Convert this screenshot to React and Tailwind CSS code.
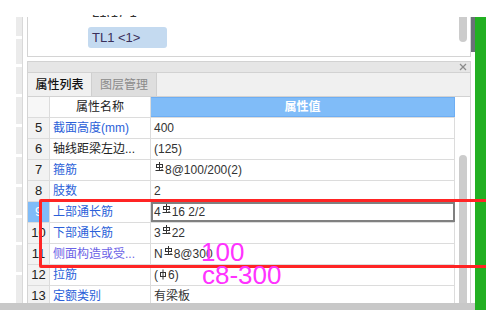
import React from 'react';

const BLUE = 'text-[#2b5fd9]';

function SymIII() {
  return (
    <svg width="9" height="10" viewBox="0 0 9 10" className="inline-block mx-[1px] align-[2px]">
      <line x1="4.5" y1="0" x2="4.5" y2="8" stroke="#333" strokeWidth="1" />
      <rect x="1.5" y="2.5" width="6" height="3" fill="none" stroke="#333" strokeWidth="1" />
      <line x1="0.5" y1="8.5" x2="8.5" y2="8.5" stroke="#333" strokeWidth="1" />
      <line x1="6.5" y1="7" x2="7.5" y2="8" stroke="#333" strokeWidth="1" />
    </svg>
  );
}

function SymI() {
  return (
    <svg width="8" height="11" viewBox="0 0 8 11" className="inline-block mx-[1px] align-[-1px]">
      <line x1="4" y1="0.5" x2="4" y2="10.5" stroke="#333" strokeWidth="1" />
      <rect x="1.5" y="3.5" width="5" height="4" fill="none" stroke="#333" strokeWidth="1" />
    </svg>
  );
}

const rows = [
  { n: 5, label: '截面高度(mm)', color: BLUE, value: ['400'] },
  { n: 6, label: '轴线距梁左边...', color: 'text-[#222]', value: ['(125)'] },
  { n: 7, label: '箍筋', color: BLUE, value: [<SymIII key="s" />, '8@100/200(2)'] },
  { n: 8, label: '肢数', color: BLUE, value: ['2'] },
  { n: 9, label: '上部通长筋', color: BLUE, value: ['4', <SymIII key="s" />, '16 2/2'], sel: true },
  { n: 10, label: '下部通长筋', color: BLUE, value: ['3', <SymIII key="s" />, '22'] },
  { n: 11, label: '侧面构造或受...', color: 'text-[#6b62e6]', value: ['N', <SymIII key="s" />, '8@300'] },
  { n: 12, label: '拉筋', color: BLUE, value: ['(', <SymI key="s" />, '6)'] },
  { n: 13, label: '定额类别', color: BLUE, value: ['有梁板'] },
];

const stripSegs = [19, 25, 27, 27, 27, 27, 28, 24, 27, 40];

export default function App() {
  return (
    <div className="relative w-[486px] h-[310px] overflow-hidden bg-white text-[12px] text-[#333] font-['Liberation_Sans','Noto_Sans_CJK_SC',sans-serif]">
      {/* top clipped text */}
      <div className="h-[17px] pt-[15px] pl-[92px]">
        <div className="h-[2px] overflow-hidden">
          <div className="-mt-[9px] text-[13px] leading-[13px] whitespace-pre text-[#333]">L1(1)  1</div>
        </div>
      </div>

      <div className="flex h-[293px]">
        <div className="flex flex-col w-[475px]">
          <div className="flex h-[286px]">
            <div className="w-[16px]" />
            <div className="w-[6px] flex flex-col gap-[3px] overflow-hidden">
              {stripSegs.map((h, i) => (
                <div key={i} className="bg-[#ebebeb] shrink-0" style={{ height: h }} />
              ))}
            </div>
            <div className="w-[1px] bg-[#d9d9d9]" />
            <div className="w-[4px]" />

            {/* panel column */}
            <div className="w-[444px] flex flex-col">
              {/* top panel */}
              <div className="h-[40px] border-l border-r border-b border-[#d4d4d4] flex">
                <div className="flex-1 pl-[60px] pt-[10px]">
                  <div className="w-[79px] h-[21px] rounded-[3px] bg-[#c4daf0] pl-[4px] text-[13px] leading-[21px] text-[#3a2f5a]">
                    TL1 &lt;1&gt;
                  </div>
                </div>
                <div className="w-[15px] pl-[4px]">
                  <div className="w-[8px] h-[25px] bg-[#cccccc] rounded-b-[4px]" />
                </div>
              </div>

              <div className="h-[4px]" />

              {/* property panel */}
              <div className="flex-1 border-l border-r border-[#d4d4d4] flex flex-col overflow-hidden">
                <div className="h-[12px] border-t border-b border-[#d2d2d2] bg-[#e6e6e6] flex justify-end items-center pr-[3px] shrink-0">
                  <svg width="8" height="8" viewBox="0 0 8 8">
                    <line x1="1" y1="1" x2="7" y2="7" stroke="#8c8c8c" strokeWidth="1.2" />
                    <line x1="7" y1="1" x2="1" y2="7" stroke="#8c8c8c" strokeWidth="1.2" />
                  </svg>
                </div>
                <div className="h-[24px] bg-[#f0f0f0] border-b border-[#d2d2d2] flex shrink-0">
                  <div className="w-[64px] border-r border-[#cfcfcf] flex items-center justify-center text-[12px] text-[#111] font-medium">
                    属性列表
                  </div>
                  <div className="w-[65px] border-r border-[#cfcfcf] bg-[#dedede] flex items-center justify-center text-[12px] text-[#8a8a8a]">
                    图层管理
                  </div>
                </div>

                <div className="flex flex-1 overflow-hidden">
                  <div className="w-[427px] flex flex-col">
                    {/* header */}
                    <div className="flex h-[21px] border-b border-[#dcdcdc] shrink-0">
                      <div className="w-[22px] border-r border-[#dcdcdc] bg-[#f7f7f7]" />
                      <div className="w-[101px] border-r border-[#dcdcdc] flex items-center justify-center text-[#222]">
                        属性名称
                      </div>
                      <div className="w-[304px] border-r border-t border-b border-[#6eaef3] bg-[#80bcf8] flex items-center justify-center text-white font-bold">
                        属性值
                      </div>
                    </div>
                    {rows.map((r) => (
                      <div key={r.n} className="flex h-[21px] border-b border-[#dcdcdc] shrink-0">
                        <div
                          className={
                            'w-[22px] border-r border-[#dcdcdc] flex items-center justify-center text-[13px] ' +
                            (r.sel ? 'bg-[#80bcf8] text-white' : 'bg-[#f2f2f2] text-[#222]')
                          }
                        >
                          {r.n}
                        </div>
                        <div className={'w-[101px] border-r border-[#dcdcdc] flex items-center pl-[3px] whitespace-nowrap overflow-hidden ' + r.color}>
                          {r.label}
                        </div>
                        <div
                          className={
                            'w-[304px] flex items-center whitespace-nowrap text-[#333] ' +
                            (r.sel ? 'border-2 border-[#808080] pl-[1px]' : 'border-r border-[#dcdcdc] pl-[3px]')
                          }
                        >
                          <span>{r.value}</span>
                        </div>
                      </div>
                    ))}
                  </div>
                  <div className="w-[15px] pl-[4px] pt-[58px]">
                    <div className="w-[8px] h-[160px] bg-[#cccccc] rounded-t-[4px]" />
                  </div>
                </div>
              </div>
            </div>

            <div className="w-[4px] flex flex-col">
              <div className="h-[35px] bg-[#6b7078]" />
            </div>
          </div>
          <div className="h-[7px] bg-[#c8c8c8]" />
        </div>
        <div className="w-[11px] bg-[#22b022]" />
      </div>

      {/* annotations */}
      <div className="absolute left-[39px] top-[199px] w-[460px] h-[69px] border-[3px] border-[#ff2424] rounded-[2px]" />
      <div className="absolute left-[201px] top-[239px] text-[26px] leading-none text-[#ff33ff] font-['Liberation_Sans',sans-serif]">100</div>
      <div className="absolute left-[202px] top-[262px] text-[26px] leading-none text-[#ff33ff] font-['Liberation_Sans',sans-serif]">c8-300</div>
    </div>
  );
}
